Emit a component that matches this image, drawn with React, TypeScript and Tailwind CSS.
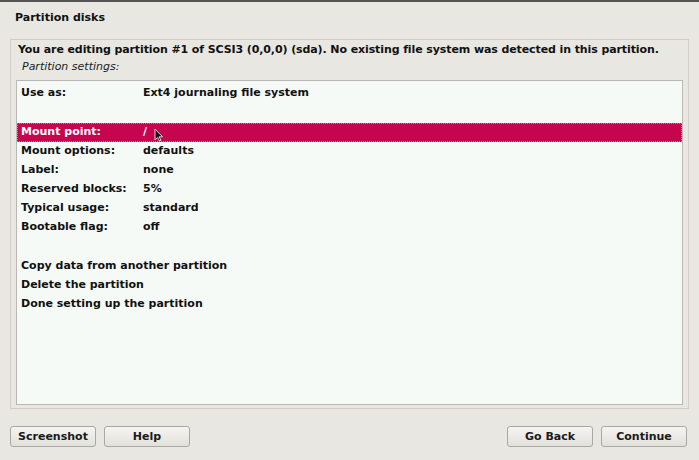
import React from 'react'

const rows: { label: string; value?: string; selected?: boolean }[] = [
    { label: 'Use as:', value: 'Ext4 journaling file system' },
    { label: '' },
    { label: 'Mount point:', value: '/', selected: true },
    { label: 'Mount options:', value: 'defaults' },
    { label: 'Label:', value: 'none' },
    { label: 'Reserved blocks:', value: '5%' },
    { label: 'Typical usage:', value: 'standard' },
    { label: 'Bootable flag:', value: 'off' },
    { label: '' },
    { label: 'Copy data from another partition' },
    { label: 'Delete the partition' },
    { label: 'Done setting up the partition' },
]

const Button = ({ children }: { children: React.ReactNode }) => (
    <button className="w-[86px] h-[21px] rounded-[3px] border border-[#a9a8a2] bg-gradient-to-b from-[#f6f5f2] to-[#e2e0da] text-[11px] font-bold text-[#1a1a1a] leading-none">
        {children}
    </button>
)

const App = () => {
    return (
        <div className="w-[699px] h-[460px] bg-[#e8e7e2] border-t-2 border-[#555] flex flex-col font-['DejaVu_Sans',sans-serif] text-[#111] overflow-hidden">
            <div className="h-[30px] pl-[15px] pt-[8px] text-[11px] font-bold">Partition disks</div>

            <div className="mx-[10px] mt-[7px] h-[370px] border border-[#cfcdc6] flex flex-col px-[5px]">
                <div className="pl-[2px] pt-[2px] text-[11px] font-bold leading-[16px] whitespace-nowrap tracking-[-0.1px]">
                    You are editing partition #1 of SCSI3 (0,0,0) (sda). No existing file system was detected in this partition.
                </div>
                <div className="pl-[6px] text-[11px] italic leading-[18px] text-[#222]">Partition settings:</div>
                <div className="mt-[4px] mb-[3px] flex-1 border border-[#b9b8b2] bg-[#f6faf6] pt-[3px]">
                    {rows.map((r, i) => (
                        <div
                            key={i}
                            className={`flex items-center text-[11px] font-bold pl-[3px] border border-dotted ${r.label ? 'h-[19px]' : 'h-[20px]'} ${r.selected ? 'bg-[#c7054f] text-white border-[#e8789f]' : 'border-transparent'}`}
                        >
                            <span className="w-[122px] shrink-0 whitespace-nowrap">{r.label}</span>
                            {r.value && <span className="whitespace-nowrap">{r.value}</span>}
                            {r.selected && (
                                <svg width="10" height="14" viewBox="0 0 10 14" className="ml-[7px] mt-[5px]">
                                    <path d="M1 1 L1 12 L3.5 9.5 L5.5 13 L7 12.3 L5 8.8 L8.5 8.8 Z" fill="#111" stroke="#fff" strokeWidth="0.8" />
                                </svg>
                            )}
                        </div>
                    ))}
                </div>
            </div>

            <div className="flex justify-between px-[10px] mt-[17px]">
                <div className="flex gap-[8px]">
                    <Button>Screenshot</Button>
                    <Button>Help</Button>
                </div>
                <div className="flex gap-[8px] pr-[2px]">
                    <Button>Go Back</Button>
                    <Button>Continue</Button>
                </div>
            </div>
        </div>
    )
}

export default App
